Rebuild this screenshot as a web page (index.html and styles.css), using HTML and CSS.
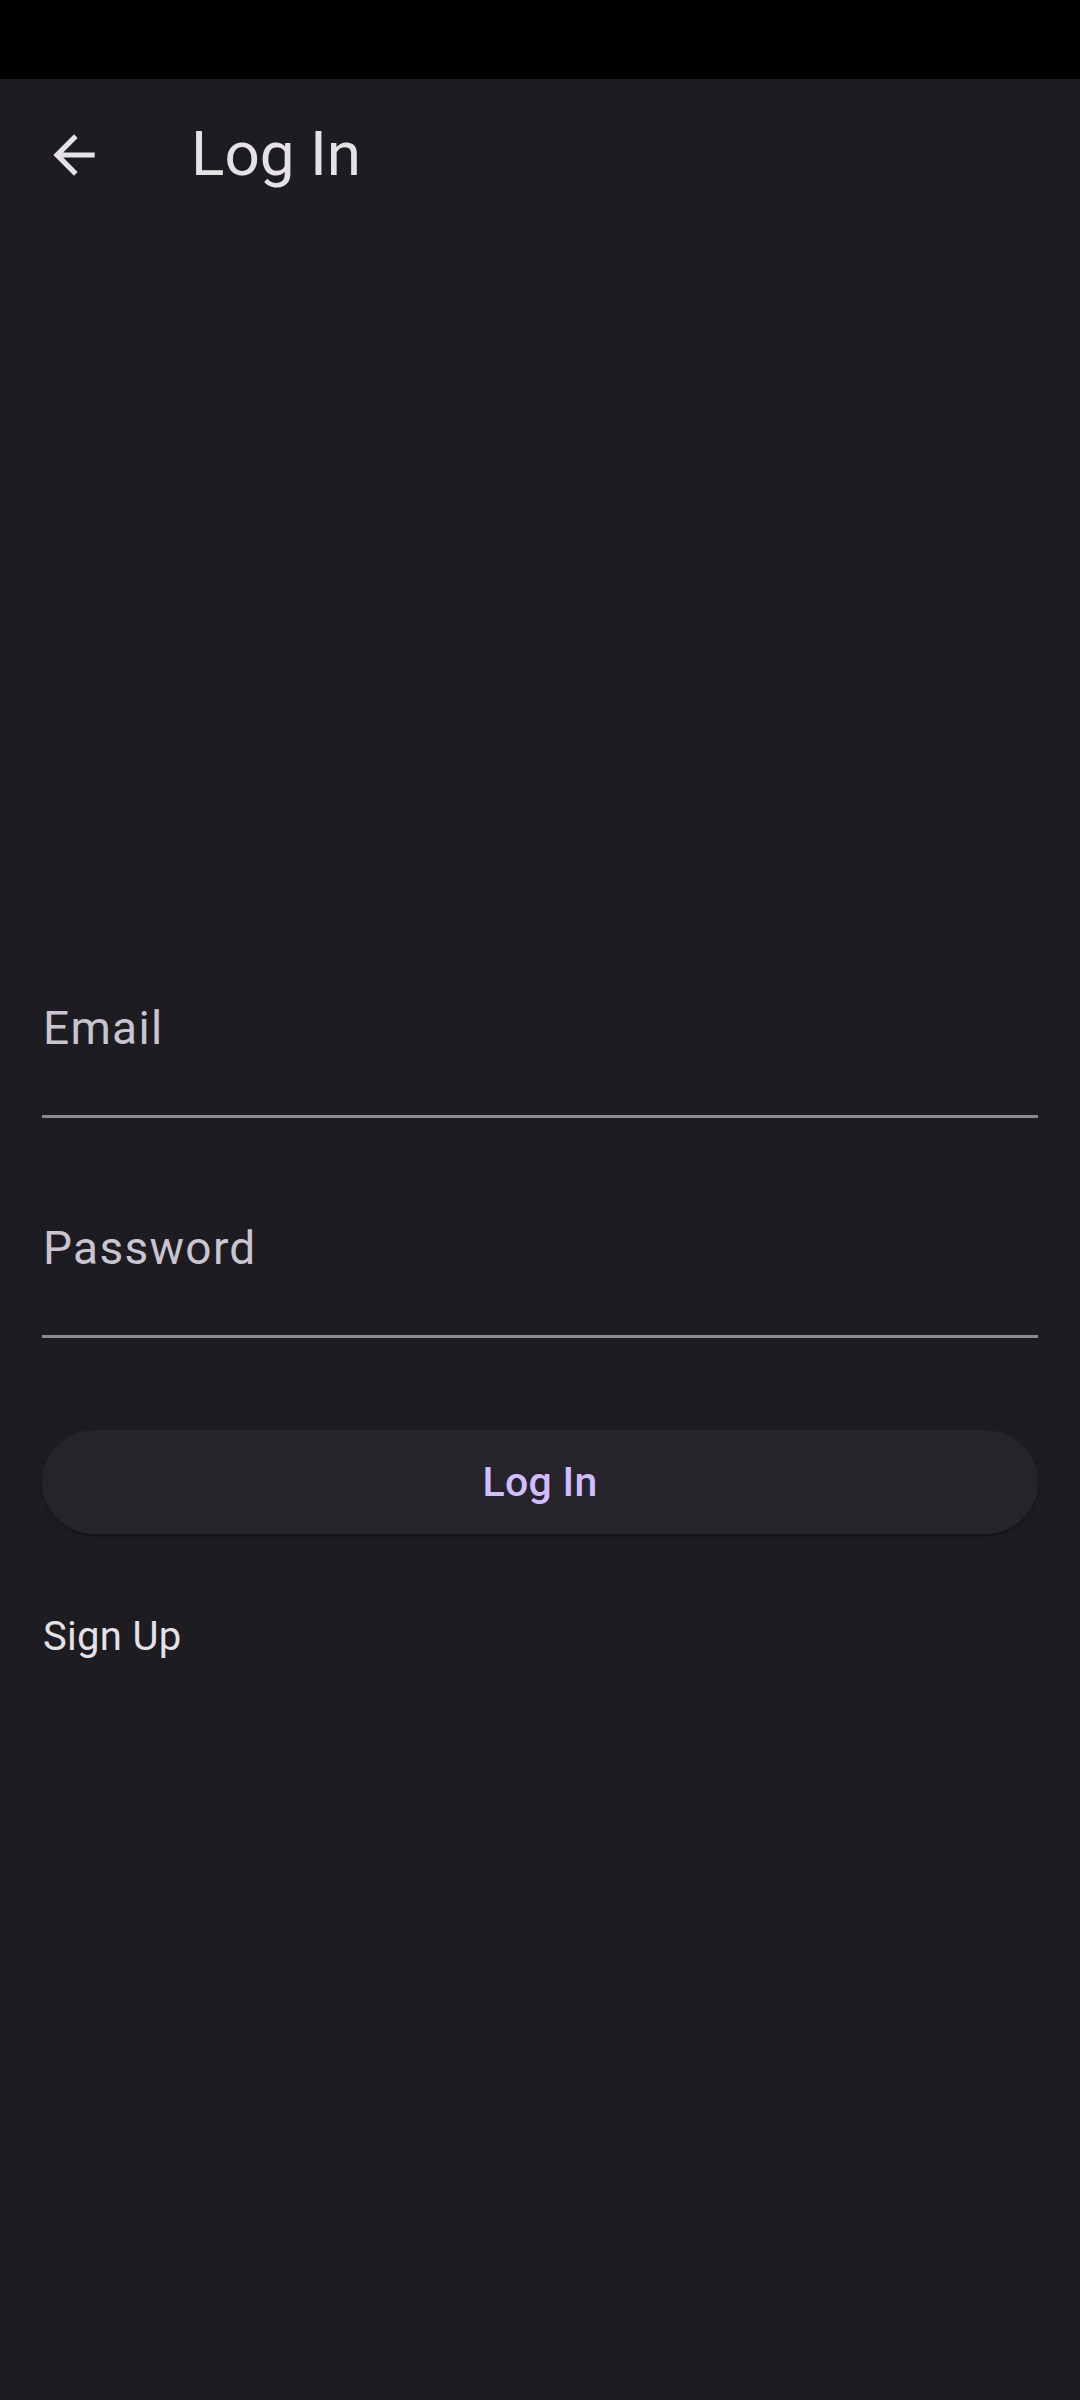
FILE: index.html
```html
<!DOCTYPE html>
<html lang="en">
<head>
<meta charset="utf-8">
<title>Log In</title>
<link rel="stylesheet" href="styles.css">
</head>
<body>
<div class="screen">
  <div class="status-bar"></div>
  <header class="app-bar">
    <button class="back-btn" aria-label="Back">
      <svg class="back-icon" viewBox="0 0 24 24" width="62" height="62">
        <path d="M20 11H7.83l5.59-5.59L12 4l-8 8 8 8 1.41-1.41L7.83 13H20v-2z" fill="#E6E1E5"/>
      </svg>
    </button>
    <h1 class="title">Log In</h1>
  </header>
  <main class="form">
    <div class="field">
      <span class="field-label">Email</span>
    </div>
    <div class="field field-second">
      <span class="field-label">Password</span>
    </div>
    <button class="login-btn">Log In</button>
    <a class="signup" href="#">Sign Up</a>
  </main>
</div>
</body>
</html>
```

FILE: styles.css
```css
html, body {
  margin: 0;
  padding: 0;
  background: #1D1C21;
}
body {
  font-family: Roboto, "Noto Sans", sans-serif;
  width: 1080px;
  height: 2400px;
  overflow: hidden;
}
.screen {
  display: flex;
  flex-direction: column;
  height: 2400px;
  background: #1D1C21;
}
.status-bar {
  height: 79px;
  background: #000000;
  flex: none;
}
.app-bar {
  height: 148px;
  display: flex;
  align-items: center;
  flex: none;
}
.back-btn {
  border: none;
  background: none;
  padding: 0;
  margin-left: 43px;
  width: 62px;
  height: 62px;
  display: flex;
  align-items: center;
  justify-content: center;
  margin-top: 4px;
}
.back-icon {
  display: block;
}
.title {
  margin: 2px 0 0 86px;
  font-weight: 400;
  font-size: 62px;
  line-height: 72px;
  color: #E6E1E5;
}
.form {
  display: flex;
  flex-direction: column;
  padding: 0 42px;
  margin-top: 734px;
}
.field {
  padding-top: 40px;
  padding-bottom: 60px;
  border-bottom: 3px solid #8C8991;
}
.field-second {
  margin-top: 63px;
}
.field-label {
  display: block;
  font-size: 46px;
  line-height: 54px;
  letter-spacing: 1.3px;
  color: #CAC4D0;
  padding-left: 1px;
}
.login-btn {
  margin-top: 92px;
  height: 104px;
  border: none;
  border-radius: 52px;
  background: #25242A;
  box-shadow: 0 2px 3px rgba(0, 0, 0, 0.3);
  font-family: Roboto, "Noto Sans", sans-serif;
  font-weight: 500;
  font-size: 41px;
  letter-spacing: 0.3px;
  color: #D0BCFF;
  padding: 0;
}
.signup {
  margin-top: 80px;
  align-self: flex-start;
  font-size: 40px;
  line-height: 46px;
  letter-spacing: 0.3px;
  color: #E6E1E5;
  text-decoration: none;
  padding-left: 1px;
}
```
